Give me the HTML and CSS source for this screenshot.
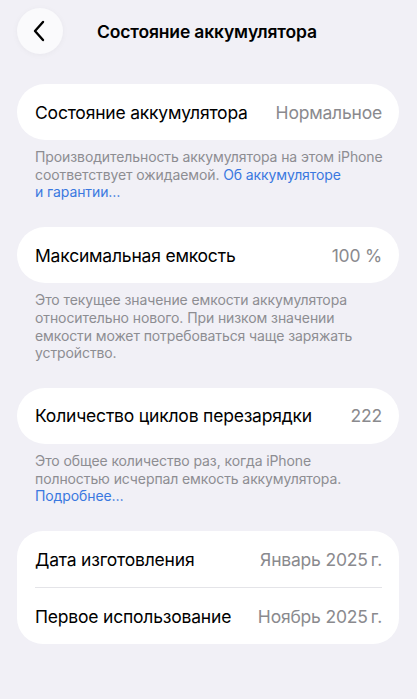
FILE: index.html
```html
<!DOCTYPE html>
<html lang="ru">
<head>
<meta charset="utf-8">
<link rel="stylesheet" href="styles.css">
</head>
<body>
<div class="page">
  <header class="nav">
    <div class="back">
      <svg width="14" height="22" viewBox="0 0 14 22"><path d="M11 2 L3 11 L11 20" fill="none" stroke="#000" stroke-width="2.4" stroke-linecap="round" stroke-linejoin="round"/></svg>
    </div>
    <div class="title">Состояние аккумулятора</div>
  </header>

  <section class="card">
    <div class="row"><span class="label">Состояние аккумулятора</span><span class="value">Нормальное</span></div>
  </section>
  <p class="foot">Производительность аккумулятора на этом iPhone<br>соответствует ожидаемой. <span class="link">Об аккумуляторе<br>и гарантии…</span></p>

  <section class="card">
    <div class="row"><span class="label">Максимальная емкость</span><span class="value">100 %</span></div>
  </section>
  <p class="foot">Это текущее значение емкости аккумулятора<br>относительно нового. При низком значении<br>емкости может потребоваться чаще заряжать<br>устройство.</p>

  <section class="card">
    <div class="row"><span class="label">Количество циклов перезарядки</span><span class="value">222</span></div>
  </section>
  <p class="foot">Это общее количество раз, когда iPhone<br>полностью исчерпал емкость аккумулятора.<br><span class="link">Подробнее…</span></p>

  <section class="card group">
    <div class="row"><span class="label">Дата изготовления</span><span class="value">Январь 2025&#8239;г.</span></div>
    <div class="sep"></div>
    <div class="row"><span class="label">Первое использование</span><span class="value">Ноябрь 2025&#8239;г.</span></div>
  </section>
</div>
</body>
</html>
```
FILE: styles.css
```css
html, body {
  margin: 0;
  padding: 0;
  background: #f1f0f6;
}
body {
  font-family: Inter, "Noto Sans", sans-serif;
  color: #000;
}
.page {
  padding: 8px 18px 0 17px;
}
.nav {
  display: flex;
  align-items: center;
  height: 46px;
  margin-bottom: 30px;
}
.back {
  width: 46px;
  height: 46px;
  border-radius: 50%;
  background: #fafafc;
  box-shadow: 0 1px 6px rgba(0,0,0,0.04);
  display: flex;
  align-items: center;
  justify-content: center;
}
.back svg { margin-left: -3px; }
.title {
  margin-left: 34px;
  font-size: 17.5px;
  font-weight: 600;
  letter-spacing: -0.15px;
}
.card {
  background: #fff;
  border-radius: 28px;
  padding: 0 17px 0 18px;
}
.group { border-radius: 26px; }
.row {
  height: 56px;
  display: flex;
  align-items: center;
  justify-content: space-between;
}
.label {
  font-size: 17.5px;
  letter-spacing: -0.2px;
}
.value {
  font-size: 17.5px;
  color: #8a8a8e;
  letter-spacing: -0.2px;
}
.sep {
  height: 1px;
  background: #e4e4e8;
}
.foot {
  margin: 8px 0 26px;
  padding: 0 10px 0 18px;
  font-size: 14px;
  line-height: 17.7px;
  color: #8d8d92;
  letter-spacing: -0.1px;
  white-space: nowrap;
}
.link { color: #3a78e0; }
```
